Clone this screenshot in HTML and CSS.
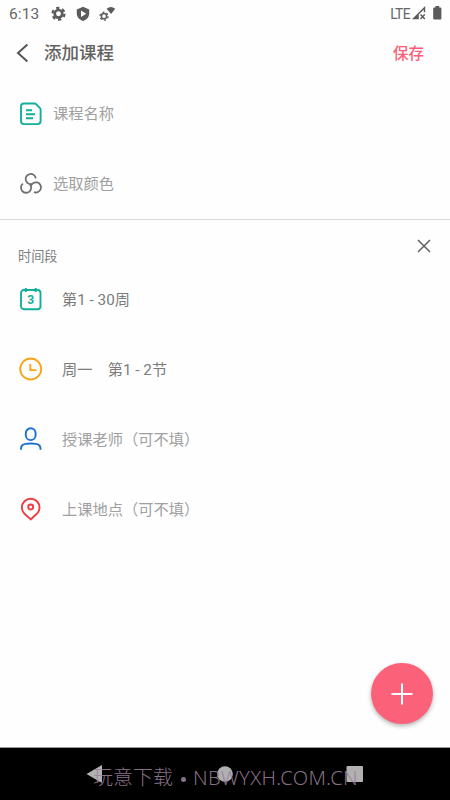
FILE: index.html
```html
<!DOCTYPE html>
<html lang="zh-CN">
<head>
<meta charset="utf-8">
<meta name="viewport" content="width=device-width, initial-scale=1">
<title>添加课程</title>
<link rel="stylesheet" href="styles.css">
</head>
<body>
<main class="screen">
  <div class="status">
    <span class="clock">6:13</span>
    <svg class="status-left" width="66" height="18" viewBox="0 0 66 18">
      <g stroke="#5b5b5b" fill="none">
        <circle cx="7.5" cy="8.8" r="3.8" stroke-width="2.7"/>
        <circle cx="7.5" cy="8.8" r="6" stroke-width="2.2" stroke-dasharray="3.3 2.983"/>
      </g>
      <path d="M32 1.800l6.200 2.700v4c0 3.800-2.700 6.200-6.200 7.600-3.500-1.400-6.200-3.800-6.200-7.600v-4z" fill="#5b5b5b"/>
      <path d="M30 5.600v6.400l5.200-3.200z" fill="#fff"/>
      <circle cx="53" cy="11.200" r="2.600" fill="none" stroke="#5b5b5b" stroke-width="1.500"/>
      <circle cx="53" cy="11.200" r="4" fill="none" stroke="#5b5b5b" stroke-width="1.300" stroke-dasharray="2 2.189"/>
      <path d="M55.600 3.700q4.300-3.400 8.600 0l-4.100 5.300z" fill="#5b5b5b"/>
    </svg>
    <span class="network">LTE</span>
    <svg class="status-right" width="32" height="18" viewBox="0 0 32 18">
      <path d="M1 15.200L14.200 2v6.300h-1.400V5.400L7.800 10.400v4.800z" fill="#5b5b5b"/>
      <path d="M9.500 10.500l4.300 4.500m0-4.500L9.500 15" stroke="#5b5b5b" stroke-width="1.400"/>
      <path d="M24.400 2h3.800v1.600h1.300q.9 0 .9.900v10q0 .9-.9.900h-6.400q-.9 0-.9-.9v-10q0-.9.900-.9h1.300z" fill="#5b5b5b"/>
    </svg>
  </div>

  <header class="header">
    <svg width="14" height="20" viewBox="0 0 14 20"><path d="M11.400 1.600L2 10l9.400 8.400" fill="none" stroke="#565656" stroke-width="2"/></svg>
    <h1 class="title">添加课程</h1>
    <button class="save">保存</button>
  </header>

  <section class="course">
    <div class="row">
      <svg class="icon teal" viewBox="0 0 24 24"><path d="M5 1.500h10.500q1 0 1.800.8l3.500 3.600q.8.800.8 1.900V19q0 3.100-3.100 3.100H5Q2 22.100 2 19V4.600q0-3.100 3-3.100z"/><path d="M7 8.200h6M7 12.200h9M7 16.200h7"/></svg>
      <span>课程名称</span>
    </div>
    <div class="row">
      <svg class="icon gray" viewBox="0 0 24 24">
        <path id="loop" d="M16.800 6.300A5.100 5.100 0 1 0 13.300 11.900"/>
        <use href="#loop" transform="rotate(120 11.900 12.700)"/>
        <use href="#loop" transform="rotate(240 11.900 12.700)"/>
      </svg>
      <span>选取颜色</span>
    </div>
  </section>

  <section class="period">
    <div class="period-head">
      <h2>时间段</h2>
      <svg width="14" height="14" viewBox="0 0 14 14"><path d="M1 1l12 12M13 1L1 13" fill="none" stroke="#606060" stroke-width="1.500"/></svg>
    </div>
    <div class="row filled">
      <svg class="icon teal" viewBox="0 0 24 24"><rect x="2" y="3" width="19.500" height="19.200" rx="3"/><path d="M6.800 1v4M16.700 1v4"/><text x="11.800" y="17" class="day">3</text></svg>
      <span>第1 - 30周</span>
    </div>
    <div class="row filled">
      <svg class="icon amber" viewBox="0 0 24 24"><circle cx="11.700" cy="12" r="10.500"/><path d="M11.300 7.100v6h6.200"/></svg>
      <span>周一　第1 - 2节</span>
    </div>
    <div class="row">
      <svg class="icon blue" viewBox="0 0 24 24"><rect x="6.800" y="1.300" width="9.800" height="11.800" rx="4.900"/><path d="M2 22.700v-.9q0-4.300 4.500-4.900 5.300-.9 10.500 0 4.500.6 4.500 4.900v.9"/></svg>
      <span>授课老师（可不填）</span>
    </div>
    <div class="row">
      <svg class="icon red" viewBox="0 0 24 24"><path d="M11.700 22.400L5.300 16.500C3.400 14.700 2.900 12.500 2.900 10.500a8.800 8.800 0 0 1 17.600 0c0 2-.5 4.200-2.400 6z"/><circle cx="11.700" cy="10" r="2.500"/></svg>
      <span>上课地点（可不填）</span>
    </div>
  </section>

  <button class="fab" aria-label="添加">
    <svg width="24" height="24" viewBox="0 0 24 24"><path d="M12 1.500v21M1.500 12h21" stroke="#fff" stroke-width="2"/></svg>
  </button>

  <nav class="navbar">
    <svg width="450" height="52" viewBox="0 0 450 52" fill="#b1b1b1"><path d="M86.500 26L102 17v18z"/><circle cx="225" cy="26" r="7.800"/><rect x="346.500" y="18" width="16.500" height="16" rx="1"/></svg>
    <div class="watermark"><span>玩意下载</span><i class="dot"></i><span class="site">NBWYXH.COM.CN</span></div>
  </nav>
</main>
</body>
</html>
```
FILE: styles.css
```css
* { box-sizing: border-box; }
body { margin: 0; background: #fefefe; font-family: Roboto, "Noto Sans CJK SC", sans-serif; }
h1, h2 { margin: 0; }
button { border: 0; padding: 0; background: none; font: inherit; }
svg { display: block; flex: none; }
.screen { position: relative; display: flex; flex-direction: column; width: 450px; height: 800px; overflow: hidden; }
.status { display: flex; align-items: center; height: 28px; padding: 0 5px 0 9px; color: #666; }
.clock { width: 42px; font-size: 15.500px; letter-spacing: .1px; }
.status-left { margin-bottom: 1px; }
.network { margin-left: auto; margin-bottom: 1px; font-size: 13.800px; letter-spacing: -.6px; }
.status-right { margin: 0 2px 2px 1px; }
.header { display: flex; align-items: center; height: 50px; padding: 0 26px 0 16px; }
.title { margin-left: 14px; color: #626262; font-size: 17.500px; font-weight: 500; line-height: 26px; }
.save { margin-left: auto; margin-bottom: 2px; color: #fb6078; font-size: 15.500px; font-weight: 500; }
.course { height: 142px; border-bottom: 1px solid #d9d9d9; }
.row { display: flex; align-items: center; gap: 10px; height: 70px; padding-left: 19px; color: #a0a0a0; font-size: 15.250px; }
.row span { margin-bottom: 3px; }
.course .row span { margin-bottom: 2px; }
.course .icon { margin-top: 1px; }
.icon { width: 24px; height: 24px; fill: none; stroke: currentColor; stroke-width: 1.900; }
.teal { color: #12ae9c; }
.gray { color: #6f6f6f; stroke-width: 1.800; }
.amber { color: #faa41a; }
.blue { color: #1670d4; }
.red { color: #f23b40; }
.day { fill: currentColor; stroke: none; font: 700 12px Roboto, sans-serif; text-anchor: middle; }
.period-head { display: flex; justify-content: space-between; height: 44px; padding: 19px 19px 0 18px; }
.period-head h2 { margin-top: 8px; font-size: 13.200px; font-weight: 400; line-height: 20px; color: #808080; }
.period .row { gap: 19px; }
.period .filled { color: #7c7c7c; }
.fab { position: absolute; left: 371px; top: 663px; display: grid; place-items: center; width: 62px; height: 61px; border-radius: 50%; background: #fb6179; box-shadow: 0 2px 4px rgba(0,0,0,.3); }
.navbar { position: relative; height: 53px; margin-top: auto; border-top: 1px solid #999; background: #000; }
.watermark { position: absolute; left: 93px; top: 15px; display: flex; align-items: center; color: rgba(151,126,151,.9); font-family: "Noto Sans", "Noto Sans CJK SC", sans-serif; font-size: 20px; font-weight: 300; line-height: 30px; white-space: nowrap; }
.dot { width: 5px; height: 5px; margin: 2px 7px 0 8px; border-radius: 50%; background: currentColor; }
.site { letter-spacing: .3px; }
```
